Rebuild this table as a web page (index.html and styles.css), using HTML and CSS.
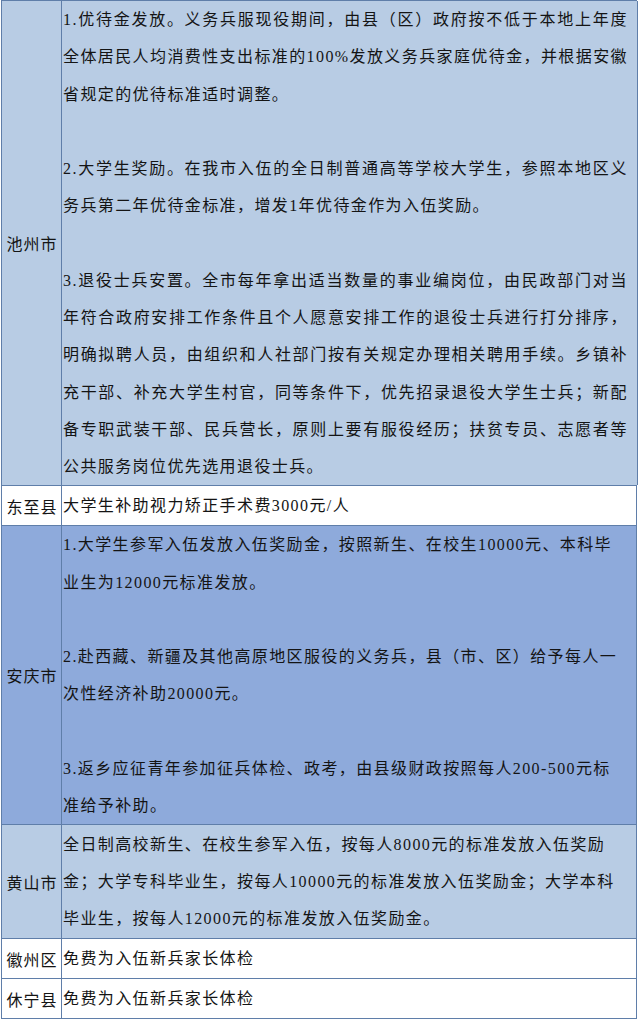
FILE: index.html
```html
<!DOCTYPE html>
<html lang="zh-CN">
<head>
<meta charset="utf-8">
<title>入伍优待政策</title>
<link rel="stylesheet" href="styles.css">
</head>
<body>
<div class="policy">
  <div class="row light">
    <div class="label">池州市</div>
    <div class="content">
      <p class="just">
        <span class="line">1.优待金发放。义务兵服现役期间，由县（区）政府按不低于本地上年度</span>
        <span class="line">全体居民人均消费性支出标准的100%发放义务兵家庭优待金，并根据安徽</span>
        <span class="last">省规定的优待标准适时调整。</span>
      </p>
      <p class="just">
        <span class="line">2.大学生奖励。在我市入伍的全日制普通高等学校大学生，参照本地区义</span>
        <span class="last">务兵第二年优待金标准，增发1年优待金作为入伍奖励。</span>
      </p>
      <p class="just">
        <span class="line">3.退役士兵安置。全市每年拿出适当数量的事业编岗位，由民政部门对当</span>
        <span class="line">年符合政府安排工作条件且个人愿意安排工作的退役士兵进行打分排序，</span>
        <span class="line">明确拟聘人员，由组织和人社部门按有关规定办理相关聘用手续。乡镇补</span>
        <span class="line">充干部、补充大学生村官，同等条件下，优先招录退役大学生士兵；新配</span>
        <span class="line">备专职武装干部、民兵营长，原则上要有服役经历；扶贫专员、志愿者等</span>
        <span class="last">公共服务岗位优先选用退役士兵。</span>
      </p>
    </div>
  </div>
  <div class="row white single">
    <div class="label">东至县</div>
    <div class="content">大学生补助视力矫正手术费3000元/人</div>
  </div>
  <div class="row dark">
    <div class="label">安庆市</div>
    <div class="content">
      <p>
        <span class="last">1.大学生参军入伍发放入伍奖励金，按照新生、在校生10000元、本科毕</span>
        <span class="last">业生为12000元标准发放。</span>
      </p>
      <p>
        <span class="last">2.赴西藏、新疆及其他高原地区服役的义务兵，县（市、区）给予每人一</span>
        <span class="last">次性经济补助20000元。</span>
      </p>
      <p>
        <span class="last">3.返乡应征青年参加征兵体检、政考，由县级财政按照每人200-500元标</span>
        <span class="last">准给予补助。</span>
      </p>
    </div>
  </div>
  <div class="row light triple">
    <div class="label">黄山市</div>
    <div class="content">
      <p>
        <span class="last">全日制高校新生、在校生参军入伍，按每人8000元的标准发放入伍奖励</span>
        <span class="last">金；大学专科毕业生，按每人10000元的标准发放入伍奖励金；大学本科</span>
        <span class="last">毕业生，按每人12000元的标准发放入伍奖励金。</span>
      </p>
    </div>
  </div>
  <div class="row white single">
    <div class="label">徽州区</div>
    <div class="content">免费为入伍新兵家长体检</div>
  </div>
  <div class="row white single">
    <div class="label">休宁县</div>
    <div class="content">免费为入伍新兵家长体检</div>
  </div>
</div>
</body>
</html>
```

FILE: styles.css
```css
html, body {
  margin: 0;
  padding: 0;
  background: #ffffff;
}

body {
  font-family: "Liberation Serif", "Noto Sans CJK SC", serif;
  font-size: 16px;
  color: #141414;
}

.policy {
  display: flex;
  flex-direction: column;
  width: 635px;
  margin-left: 1px;
  border-top: 1px solid #5f7ea9;
  border-left: 1px solid #5f7ea9;
}

.row {
  display: grid;
  grid-template-columns: 60px 1fr;
  border-bottom: 1px solid #5f7ea9;
}

.row.light { background: #b8cce4; }
.row.dark { background: #8eaadb; }
.row.white { background: #ffffff; }

.label {
  display: flex;
  align-items: center;
  justify-content: center;
  border-right: 1px solid #5f7ea9;
  font-family: "Noto Sans CJK SC", sans-serif;
  letter-spacing: 1px;
  padding-left: 1px;
  white-space: nowrap;
}

.content {
  border-right: 1px solid #5f7ea9;
  padding: 0 9px 0 1px;
  line-height: 37.25px;
  letter-spacing: 1.4px;
  white-space: nowrap;
}

.content p {
  margin: 0 0 37.25px 0;
}

.content p:last-child {
  margin-bottom: 0;
}

.content .line,
.content .last {
  display: block;
}

.just .line {
  text-align: justify;
  text-align-last: justify;
}

.single .content {
  line-height: 39px;
}

.triple .content {
  padding-top: 1px;
  padding-bottom: 1px;
  line-height: 37px;
}
```
